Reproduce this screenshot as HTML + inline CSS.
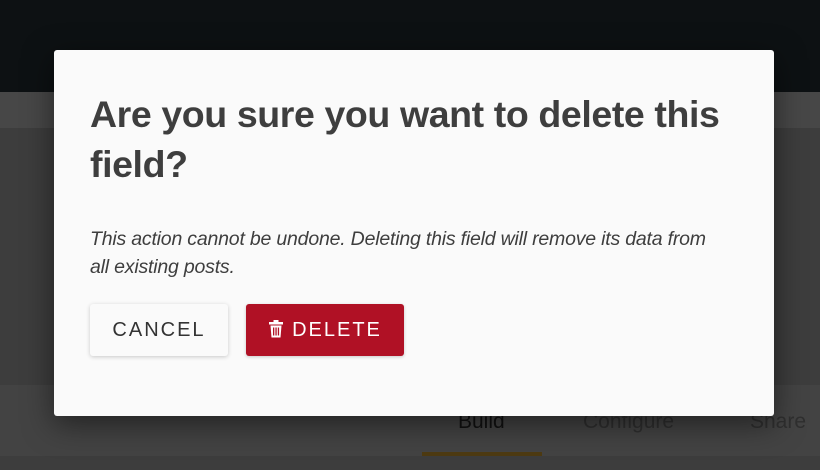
<!DOCTYPE html>
<html><head><meta charset="utf-8"><style>
html,body{margin:0;padding:0;width:820px;height:470px;overflow:hidden;background:#3d3d3d;font-family:"Liberation Sans",sans-serif;}
.top{position:absolute;left:0;top:0;width:820px;height:92px;background:#0d1113;}
.strip{position:absolute;left:0;top:92px;width:820px;height:36px;background:#474747;}
.mid{position:absolute;left:0;top:128px;width:820px;height:257px;background:#3d3d3d;}
.tabs{position:absolute;left:0;top:385px;width:820px;height:71px;background:#434343;}
.tab{position:absolute;top:410px;font-size:21px;color:#2f2f2f;}
.ul{position:absolute;left:422px;top:452px;width:120px;height:4px;background:#4d3a12;}
.modal{position:absolute;left:54px;top:50px;width:720px;height:366px;background:#fafafa;border-radius:3px;box-shadow:0 8px 30px rgba(0,0,0,.5);}
h1{position:absolute;left:36px;top:39px;margin:0;width:680px;font-size:37.5px;line-height:50px;font-weight:bold;color:#3e3e3e;letter-spacing:-0.4px;}
p{position:absolute;left:36px;top:175px;margin:0;width:625px;font-size:19.5px;line-height:28px;font-style:italic;color:#3e3e3e;letter-spacing:-0.2px;}
.btn{position:absolute;top:254px;height:52px;border-radius:3px;font-size:20px;letter-spacing:2px;line-height:53px;text-align:center;box-sizing:border-box;}
.cancel{left:36px;width:138px;background:#fafafa;color:#333;box-shadow:0 1px 4px rgba(0,0,0,.2);}
.del{left:192px;width:158px;background:#b01125;color:#fff;box-shadow:0 1px 3px rgba(0,0,0,.2);}
.del svg{vertical-align:-2px;margin-right:8px;}
</style></head><body>
<div class="top"></div><div class="strip"></div><div class="mid"></div>
<div class="tabs"></div>
<div class="tab" style="left:458px;color:#111">Build</div>
<div class="tab" style="left:583px">Configure</div>
<div class="tab" style="left:750px">Share</div>
<div class="ul"></div>
<div class="modal">
<h1>Are you sure you want to delete this field?</h1>
<p>This action cannot be undone. Deleting this field will remove its data from all existing posts.</p>
<div class="btn cancel">CANCEL</div>
<div class="btn del"><svg width="16" height="18" viewBox="0 0 16 18"><rect x="1" y="2" width="14" height="2.5" fill="#fff"/><rect x="5.5" y="0" width="5" height="2.5" fill="#fff"/><path d="M2.5 5.5h11l-1 12h-9z" fill="#fff"/><rect x="5" y="7.5" width="1.3" height="8" fill="#b01125"/><rect x="7.4" y="7.5" width="1.3" height="8" fill="#b01125"/><rect x="9.8" y="7.5" width="1.3" height="8" fill="#b01125"/></svg>DELETE</div>
</div>
</body></html>
